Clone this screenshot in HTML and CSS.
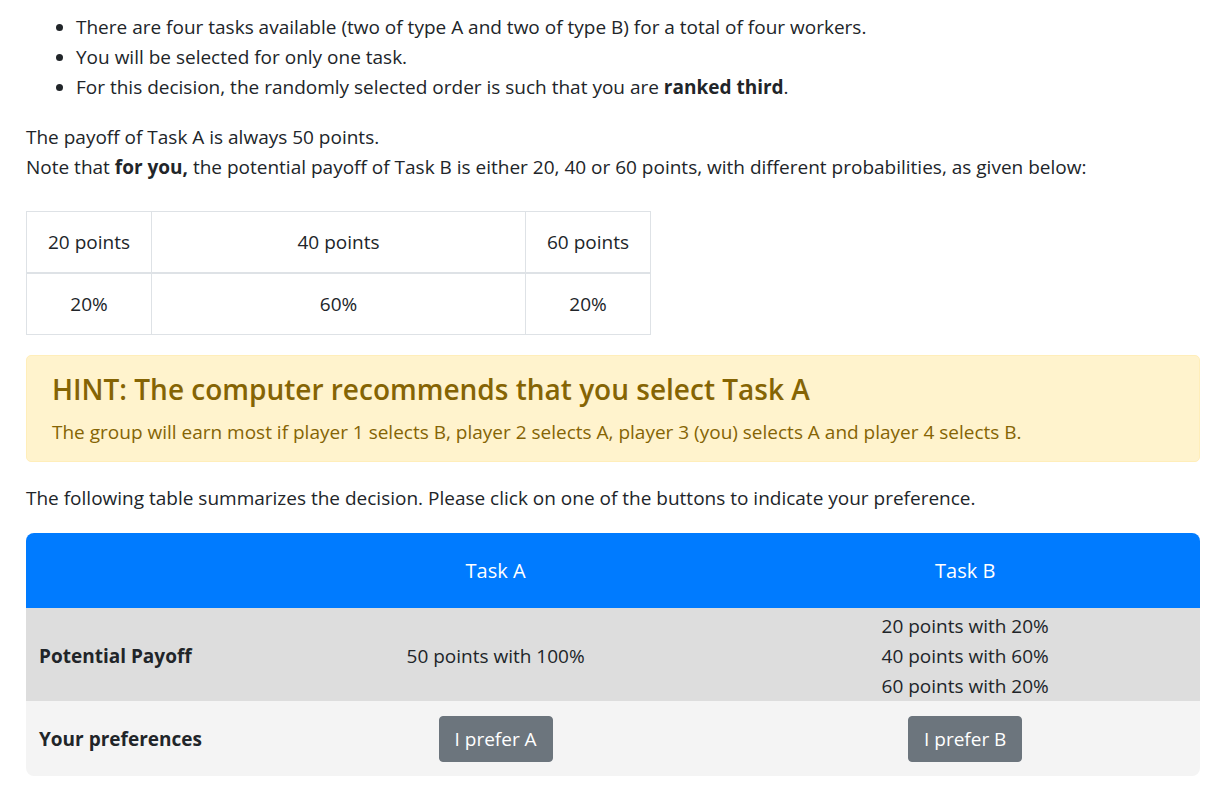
FILE: index.html
```html
<!DOCTYPE html>
<html>
<head>
<meta charset="utf-8">
<link rel="stylesheet" href="styles.css">
</head>
<body>
<div class="page">
  <ul class="rules">
    <li>There are four tasks available (two of type A and two of type B) for a total of four workers.</li>
    <li>You will be selected for only one task.</li>
    <li>For this decision, the randomly selected order is such that you are <b>ranked third</b>.</li>
  </ul>
  <p class="intro">The payoff of Task A is always 50 points.<br>Note that <b>for you,</b> the potential payoff of Task B is either 20, 40 or 60 points, with different probabilities, as given below:</p>
  <table class="probs">
    <tr><td class="c-side">20 points</td><td class="c-mid">40 points</td><td class="c-side">60 points</td></tr>
    <tr><td>20%</td><td>60%</td><td>20%</td></tr>
  </table>
  <div class="alert">
    <h4 class="alert-title">HINT: The computer recommends that you select Task A</h4>
    <p class="alert-text">The group will earn most if player 1 selects B, player 2 selects A, player 3 (you) selects A and player 4 selects B.</p>
  </div>
  <p class="lead-in">The following table summarizes the decision. Please click on one of the buttons to indicate your preference.</p>
  <table class="decision">
    <thead>
      <tr><th class="col-label"></th><th class="col-task">Task A</th><th class="col-task">Task B</th></tr>
    </thead>
    <tbody>
      <tr class="row-payoff">
        <td class="label">Potential Payoff</td>
        <td>50 points with 100%</td>
        <td>20 points with 20%<br>40 points with 60%<br>60 points with 20%</td>
      </tr>
      <tr class="row-pref">
        <td class="label">Your preferences</td>
        <td><button class="btn">I prefer A</button></td>
        <td><button class="btn">I prefer B</button></td>
      </tr>
    </tbody>
  </table>
</div>
</body>
</html>
```
FILE: styles.css
```css
html, body {
  margin: 0;
  padding: 0;
  background: #fff;
}
body {
  font-family: "Open Sans", "Noto Sans", sans-serif;
  font-size: 19px;
  line-height: 30px;
  color: #212529;
}
.page {
  width: 1174px;
  margin-left: 26px;
  padding-top: 12px;
}
.rules {
  margin: 0 0 20px 0;
  padding-left: 50px;
}
.intro {
  margin: 0 0 29px 0;
}
.probs {
  border-collapse: collapse;
  margin-bottom: 20px;
}
.probs td {
  border: 1px solid #dee2e6;
  text-align: center;
  padding: 15px 0;
  height: 30px;
}
.probs .c-side { width: 124px; }
.probs .c-mid { width: 373px; }
.probs tr:first-child td { border-bottom-width: 2px; }
.alert {
  background: #fff3cd;
  border: 1px solid #ffeeba;
  color: #856404;
  border-radius: 5px;
  padding: 15px 25px 14px;
  margin-bottom: 21px;
}
.alert-title {
  margin: 0 0 10px 0;
  font-size: 28px;
  line-height: 36px;
  font-weight: 600;
}
.alert-text {
  margin: 0;
}
.lead-in {
  margin: 0 0 20px 0;
}
.decision {
  width: 100%;
  border-collapse: separate;
  border-spacing: 0;
  border-radius: 8px;
  overflow: hidden;
  table-layout: fixed;
}
.decision .col-label { width: 20%; }
.decision .col-task { width: 40%; }
.decision thead th {
  background: #007bff;
  color: #fff;
  font-weight: 400;
  font-size: 20px;
  padding: 23px 0 22px;
  line-height: 30px;
  text-align: center;
}
.decision td {
  text-align: center;
  vertical-align: middle;
}
.decision td.label {
  text-align: left;
  font-weight: 700;
  padding-left: 13px;
}
.row-payoff td {
  background: #dddddd;
  padding: 3px 0 0;
}
.row-pref td {
  background: #f4f4f4;
  padding: 15px 0 14px;
}
.btn {
  font-family: inherit;
  font-size: 19px;
  line-height: 30px;
  color: #fff;
  background: #6c757d;
  border: 1px solid #6c757d;
  border-radius: 4px;
  padding: 7px 15px;
  cursor: pointer;
}
```
